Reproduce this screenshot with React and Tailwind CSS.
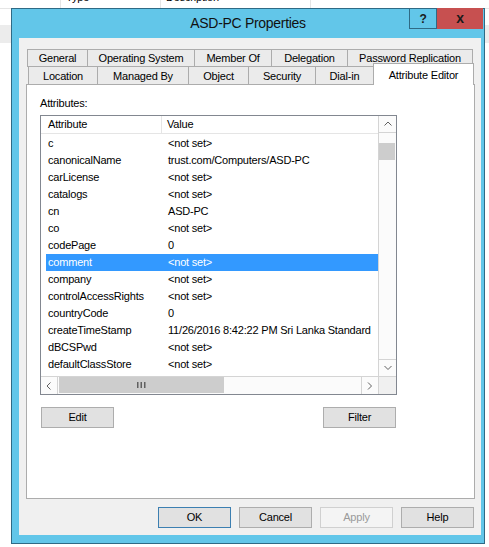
import React from "react"

const rows = [
  ["c", "<not set>"],
  ["canonicalName", "trust.com/Computers/ASD-PC"],
  ["carLicense", "<not set>"],
  ["catalogs", "<not set>"],
  ["cn", "ASD-PC"],
  ["co", "<not set>"],
  ["codePage", "0"],
  ["comment", "<not set>"],
  ["company", "<not set>"],
  ["controlAccessRights", "<not set>"],
  ["countryCode", "0"],
  ["createTimeStamp", "11/26/2016 8:42:22 PM Sri Lanka Standard"],
  ["dBCSPwd", "<not set>"],
  ["defaultClassStore", "<not set>"],
]

const backTabs = [
  ["General", "w-[60px]"],
  ["Operating System", "w-[107px]"],
  ["Member Of", "w-[77px]"],
  ["Delegation", "w-[76px]"],
  ["Password Replication", "w-[126px] border-r"],
]

const frontTabs = [
  ["Location", "w-[69px]"],
  ["Managed By", "w-[91px]"],
  ["Object", "w-[60px]"],
  ["Security", "w-[67px]"],
  ["Dial-in", "w-[58px]"],
]

function Chevron({ dir }) {
  const pts = {
    up: "0.5,4.5 4,1 7.5,4.5",
    down: "0.5,1 4,4.5 7.5,1",
    left: "4.5,0.5 1,4 4.5,7.5",
    right: "1,0.5 4.5,4 1,7.5",
  }[dir]
  const vertical = dir === "up" || dir === "down"
  return (
    <svg width={vertical ? 8 : 6} height={vertical ? 6 : 8} viewBox={vertical ? "0 0 8 6" : "0 0 6 8"}>
      <polyline points={pts} fill="none" stroke="#606060" strokeWidth="1" />
    </svg>
  )
}

function Button({ children, className = "" }) {
  return (
    <div className={`w-[73px] h-[21px] flex items-center justify-center border ${className}`}>
      {children}
    </div>
  )
}

export default function App() {
  return (
    <div className="relative w-[489px] h-[547px] overflow-hidden bg-white font-['Liberation_Sans',Arial,sans-serif] text-[11px] tracking-[-0.2px] text-black">
      {/* list view behind the dialog */}
      <div className="flex h-[9px] border-b border-[#e5e5e5]">
        <div className="w-[61px] border-r border-[#e5e5e5]" />
        <div className="w-[100px] border-r border-[#e5e5e5] pl-[5px]">
          <span className="block -mt-[8px] leading-[11px]">Type</span>
        </div>
        <div className="w-[150px] border-r border-[#e5e5e5] pl-[5px]">
          <span className="block -mt-[8px] leading-[11px]">Description</span>
        </div>
      </div>
      <div className="mt-[16px] h-[18px] bg-[#ececec]" />

      {/* dialog window */}
      <div className="absolute left-[11px] top-[8px] w-[474px] h-[536px] border border-[#2f6a85] bg-[#62c6e9] flex flex-col">
        <div className="relative h-[29px] flex items-center justify-center">
          <span className="text-[14px] tracking-[-0.3px] text-[#111]">ASD-PC Properties</span>
          <div className="absolute -top-px right-[1px] flex">
            <div className="w-[28px] h-[21px] border border-[#2f6a85] flex items-center justify-center font-bold text-[12px] text-[#1a1a1a]">?</div>
            <div className="w-[46px] h-[21px] bg-[#c75050] flex items-center justify-center font-bold text-[14px] text-[#1a1a1a] pb-[1px]">x</div>
          </div>
        </div>

        <div className="ml-[7px] mr-[3px] h-[497px] bg-[#f0f0f0] pt-[11px] pl-[7px] pr-[6px] flex flex-col">
          {/* tabs */}
          <div className="h-[35px] flex flex-col">
            <div className="flex h-[17px] pl-[1px]">
              {backTabs.map(([label, w]) => (
                <div key={label} className={`${w} h-[18px] border-t border-l border-[#acacac] bg-[#ebebeb] flex items-center justify-center`}>
                  {label}
                </div>
              ))}
            </div>
            <div className="flex h-[18px] pl-[2px]">
              {frontTabs.map(([label, w]) => (
                <div key={label} className={`${w} h-[18px] border-t border-l border-[#acacac] bg-[#ebebeb] flex items-center justify-center pt-[1px]`}>
                  {label}
                </div>
              ))}
              <div className="relative z-10 w-[101px] h-[22px] -mt-[3px] border-t border-l border-r border-[#acacac] bg-white flex justify-center pt-[3px]">
                Attribute Editor
              </div>
            </div>
          </div>

          {/* tab page */}
          <div className="h-[415px] border border-[#acacac] bg-white pt-[12px] pl-[13px]">
            <div className="leading-[13px]">Attributes:</div>
            <div className="mt-[5px] w-[357px] h-[280px] border border-[#828790] grid grid-cols-[337px_18px] grid-rows-[260px_18px]">
              {/* list content */}
              <div className="overflow-hidden">
                <div className="flex h-[18px] border-b border-[#e5e5e5] items-center">
                  <div className="w-[121px] h-full border-r border-[#e5e5e5] pl-[7px] flex items-center">Attribute</div>
                  <div className="pl-[5px]">Value</div>
                </div>
                <div className="pt-[1px] pl-[5px]">
                  {rows.map(([attr, val]) => {
                    const sel = attr === "comment"
                    return (
                      <div key={attr} className={`flex h-[17px] items-center whitespace-nowrap ${sel ? "bg-[#3399ff] text-white" : ""}`}>
                        <div className="w-[116px] pl-[2px] shrink-0">{attr}</div>
                        <div className="pl-[6px]">{val}</div>
                      </div>
                    )
                  })}
                </div>
              </div>

              {/* vertical scrollbar */}
              <div className="border-l border-[#d4d4d4] bg-[#fbfbfb] flex flex-col">
                <div className="h-[17px] border-b border-[#d4d4d4] flex items-center justify-center">
                  <Chevron dir="up" />
                </div>
                <div className="flex-1">
                  <div className="mt-[10px] mr-[1px] h-[17px] bg-[#cdcdcd]" />
                </div>
                <div className="h-[17px] border-t border-[#d4d4d4] flex items-center justify-center">
                  <Chevron dir="down" />
                </div>
              </div>

              {/* horizontal scrollbar */}
              <div className="border-t border-[#d4d4d4] bg-[#fbfbfb] flex">
                <div className="w-[17px] border-r border-[#d4d4d4] flex items-center justify-center">
                  <Chevron dir="left" />
                </div>
                <div className="ml-[1px] mb-[1px] w-[165px] bg-[#cdcdcd] flex items-center justify-center">
                  <svg width="9" height="6" viewBox="0 0 9 6">
                    <rect x="0" y="0" width="1.5" height="6" fill="#606060" />
                    <rect x="3.5" y="0" width="1.5" height="6" fill="#606060" />
                    <rect x="7" y="0" width="1.5" height="6" fill="#606060" />
                  </svg>
                </div>
                <div className="flex-1" />
                <div className="w-[17px] border-l border-[#d4d4d4] flex items-center justify-center">
                  <Chevron dir="right" />
                </div>
              </div>

              {/* corner */}
              <div className="border-t border-l border-[#d4d4d4] bg-[#f0f0f0]" />
            </div>

            <div className="mt-[12px] w-[357px] px-[1px] flex justify-between">
              <Button className="bg-[#e1e1e1] border-[#adadad]">Edit</Button>
              <Button className="bg-[#e1e1e1] border-[#adadad]">Filter</Button>
            </div>
          </div>

          {/* dialog buttons */}
          <div className="mt-[8px] flex justify-end gap-[8px] mr-[1px]">
            <Button className="bg-[#e1e1e1] border-[#3c7fb1]">OK</Button>
            <Button className="bg-[#e1e1e1] border-[#adadad]">Cancel</Button>
            <Button className="bg-[#f4f4f4] border-[#d0d0d0] text-[#9a9a9a]">Apply</Button>
            <Button className="bg-[#e1e1e1] border-[#adadad]">Help</Button>
          </div>
        </div>
      </div>
    </div>
  )
}
